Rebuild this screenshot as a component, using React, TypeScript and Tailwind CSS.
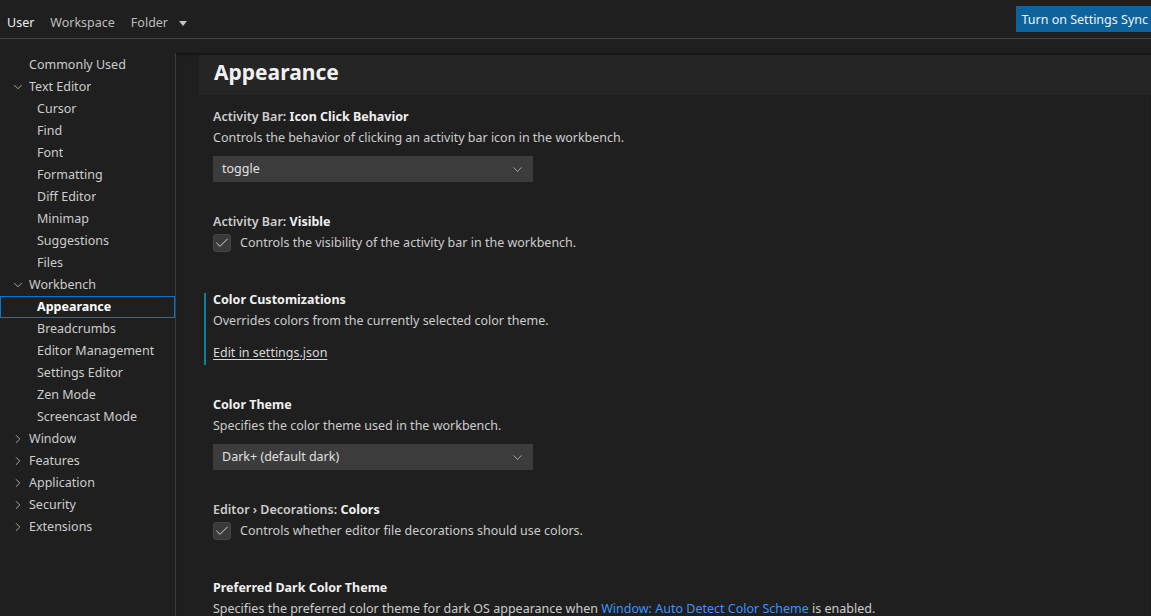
import { ChevronDown, ChevronRight, Check } from "lucide-react";

const font = { fontFamily: '"Noto Sans", "Open Sans", sans-serif' };

type NavItem = { label: string; level: 0 | 1 | 2; open?: boolean; selected?: boolean };

const nav: NavItem[] = [
  { label: "Commonly Used", level: 0 },
  { label: "Text Editor", level: 1, open: true },
  { label: "Cursor", level: 2 },
  { label: "Find", level: 2 },
  { label: "Font", level: 2 },
  { label: "Formatting", level: 2 },
  { label: "Diff Editor", level: 2 },
  { label: "Minimap", level: 2 },
  { label: "Suggestions", level: 2 },
  { label: "Files", level: 2 },
  { label: "Workbench", level: 1, open: true },
  { label: "Appearance", level: 2, selected: true },
  { label: "Breadcrumbs", level: 2 },
  { label: "Editor Management", level: 2 },
  { label: "Settings Editor", level: 2 },
  { label: "Zen Mode", level: 2 },
  { label: "Screencast Mode", level: 2 },
  { label: "Window", level: 1 },
  { label: "Features", level: 1 },
  { label: "Application", level: 1 },
  { label: "Security", level: 1 },
  { label: "Extensions", level: 1 },
];

function NavRow({ item }: { item: NavItem }) {
  return (
    <div
      className={
        "flex h-[22px] items-center border " +
        (item.selected ? "border-[#0078d4] font-bold text-white" : "border-transparent text-[#cccccc]")
      }
    >
      {item.level === 1 ? (
        <span className="ml-[10px] flex w-[18px] items-center text-[#c5c5c5]">
          {item.open ? (
            <ChevronDown size={14} strokeWidth={1.4} />
          ) : (
            <ChevronRight size={14} strokeWidth={1.4} />
          )}
        </span>
      ) : item.level === 0 ? (
        <span className="w-[28px]" />
      ) : (
        <span className="w-[36px]" />
      )}
      <span className="truncate">{item.label}</span>
    </div>
  );
}

function Title({ cat, label }: { cat?: string; label: string }) {
  return (
    <div className="h-[20px] leading-[20px] font-semibold text-[#e7e7e7]">
      {cat && <span className="text-[#cccccc]">{cat} </span>}
      <span className="font-bold text-[#f0f0f0]">{label}</span>
    </div>
  );
}

function Desc({ children }: { children: React.ReactNode }) {
  return <div className="h-[22px] leading-[22px] text-[#cccccc]">{children}</div>;
}

function Select({ value }: { value: string }) {
  return (
    <div className="mt-[7px] flex h-[26px] w-[320px] items-center justify-between bg-[#3c3c3c] pl-[9px] pr-[8px] text-[#e0e0e0]">
      <span>{value}</span>
      <ChevronDown size={15} strokeWidth={1.2} className="text-[#c5c5c5]" />
    </div>
  );
}

function CheckRow({ children }: { children: React.ReactNode }) {
  return (
    <div className="mb-[7px] flex h-[22px] items-center gap-[9px] text-[#cccccc]">
      <span className="flex h-[18px] w-[18px] items-center justify-center rounded-[3px] border border-[#454545] bg-[#3a3a3a] text-[#ededed]">
        <Check size={16} strokeWidth={1.3} />
      </span>
      <span>{children}</span>
    </div>
  );
}

export default function App() {
  return (
    <div className="h-[616px] w-[1151px] overflow-hidden bg-[#1f1f1f] text-[12.5px]" style={font}>
      <div className="flex h-[39px] items-center justify-between border-b border-[#454545]">
        <div className="flex items-center pt-[8px]">
          <span className="ml-[7px] text-[#f0f0f0]">User</span>
          <span className="ml-[16px] text-[#bdbdbd]">Workspace</span>
          <span className="ml-[16px] text-[#bdbdbd]">Folder</span>
          <span className="ml-[11px] mt-[1px] h-0 w-0 border-x-[4px] border-t-[5px] border-x-transparent border-t-[#c5c5c5]" />
        </div>
        <div className="mb-[6px] self-end bg-[#0e639c] pl-[5px] pr-[3px] pt-[4px] pb-[2px] leading-[20px] text-[#f2f2f2]">
          Turn on Settings Sync
        </div>
      </div>
      <div className="mt-[14px] flex h-[563px]">
        <div className="w-[176px] shrink-0 border-r border-[#3c3c3c] pt-[1px]">
          {nav.map((n) => (
            <NavRow key={n.label} item={n} />
          ))}
        </div>
        <div className="relative flex-1 pl-[23px] shadow-[inset_0_3px_3px_-2px_#0d0d0d]">
          <div className="mt-[2px] flex h-[40px] items-center bg-[#252526] pb-[4px] pl-[15px] text-[21px] font-bold text-[#f0f0f0]">
            Appearance
          </div>
          <div className="pl-[14px] pt-[1px]">
            <div className="pt-[11px] pb-[19px]">
              <Title cat="Activity Bar:" label="Icon Click Behavior" />
              <Desc>Controls the behavior of clicking an activity bar icon in the workbench.</Desc>
              <Select value="toggle" />
            </div>
            <div className="pt-[11px] pb-[18px]">
              <Title cat="Activity Bar:" label="Visible" />
              <CheckRow>Controls the visibility of the activity bar in the workbench.</CheckRow>
            </div>
            <div className="relative pt-[11px] pb-[18px]">
              <span className="absolute left-[-9px] top-[14px] h-[72px] w-[2px] bg-[#0c7d9d]" />
              <Title label="Color Customizations" />
              <Desc>Overrides colors from the currently selected color theme.</Desc>
              <div className="mt-[10px] h-[24px] leading-[22px] text-[#d8d8d8] underline underline-offset-2">
                Edit in settings.json
              </div>
            </div>
            <div className="pt-[11px] pb-[19px]">
              <Title label="Color Theme" />
              <Desc>Specifies the color theme used in the workbench.</Desc>
              <Select value="Dark+ (default dark)" />
            </div>
            <div className="pt-[11px] pb-[18px]">
              <Title cat="Editor › Decorations:" label="Colors" />
              <CheckRow>Controls whether editor file decorations should use colors.</CheckRow>
            </div>
            <div className="pt-[11px] pb-[18px]">
              <Title label="Preferred Dark Color Theme" />
              <Desc>
                Specifies the preferred color theme for dark OS appearance when{" "}
                <span className="text-[#3794ff]">Window: Auto Detect Color Scheme</span> is enabled.
              </Desc>
            </div>
          </div>
        </div>
      </div>
    </div>
  );
}
